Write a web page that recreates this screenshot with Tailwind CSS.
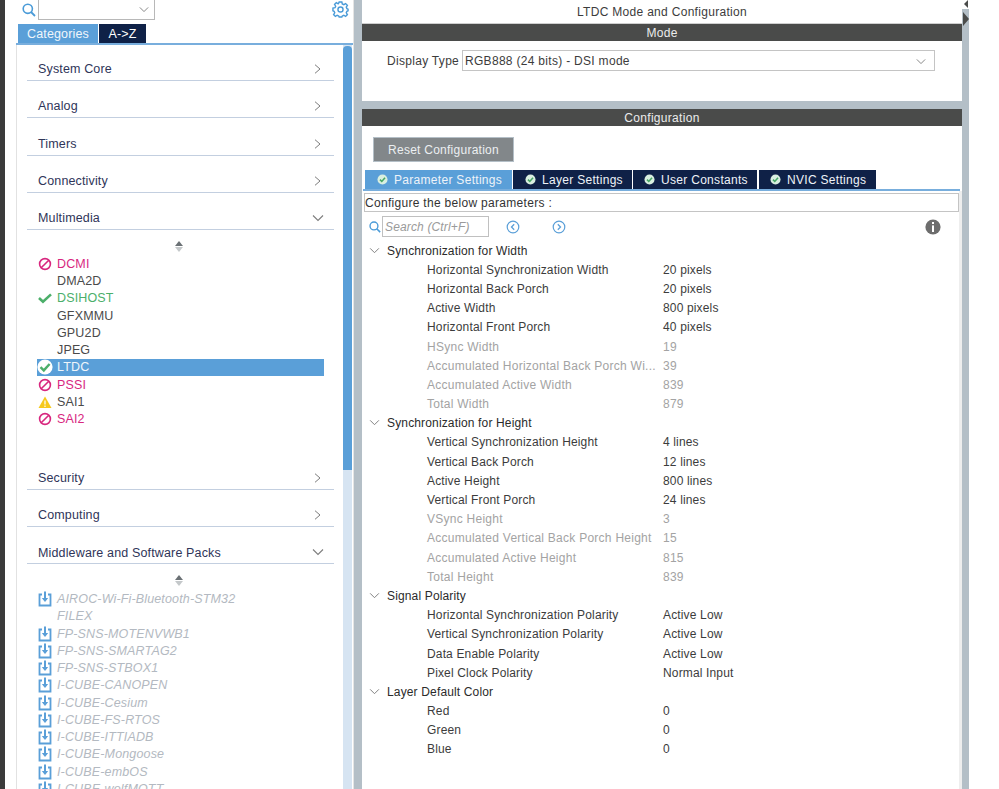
<!DOCTYPE html>
<html lang="en">
<head>
    <meta charset="UTF-8">
    <title>LTDC Mode and Configuration</title>
    <script src="https://cdn.jsdelivr.net/npm/@tailwindcss/browser@4"></script>
</head>
<body class="bg-white font-['Liberation_Sans',Arial,sans-serif] text-[12px] tracking-[0.15px] overflow-hidden">
    <svg class="hidden">
        <symbol id="i-no" viewBox="0 0 14 14"><circle cx="7" cy="7" r="5.4" fill="none" stroke="#d8277f" stroke-width="1.6"/><path d="M3.2 10.8 10.8 3.2" stroke="#d8277f" stroke-width="1.6"/></symbol>
        <symbol id="i-check" viewBox="0 0 14 14"><path d="M1 7 5 10.8 13 3.4" fill="none" stroke="#4caf6a" stroke-width="2.6"/></symbol>
        <symbol id="i-warn" viewBox="0 0 14 14"><path d="M7 1.5 13.5 13H.5Z" fill="#f6c91c"/><path d="M7 5.5V9.5M7 10.6V12" stroke="#fff" stroke-width="1.2"/></symbol>
        <symbol id="i-dl" viewBox="0 0 14 16"><path d="M4 3.5H1.5V14.5H12.5V3.5H10" fill="none" stroke="#5a9fd8" stroke-width="1.8"/><path d="M7 .5V9" stroke="#5a9fd8" stroke-width="2"/><path d="M3.8 7 7 11 10.2 7Z" fill="#5a9fd8"/></symbol>
        <symbol id="i-ok" viewBox="0 0 14 14"><circle cx="7" cy="7" r="6.4" fill="#d9efe0"/><path d="M3.8 7.2 6.1 9.5 10.2 4.9" fill="none" stroke="#47a765" stroke-width="2"/></symbol>
        <symbol id="i-right" viewBox="0 0 7 10"><path d="M1 .7 6 5 1 9.3" fill="none" stroke="#7d7d7d" stroke-width="1"/></symbol>
        <symbol id="i-down" viewBox="0 0 12 8"><path d="M1 1.5 6 6.5 11 1.5" fill="none" stroke="#7d7d7d" stroke-width="1.1"/></symbol>
        <symbol id="i-sort" viewBox="0 0 8 11"><path d="M4 0 8 5H0Z" fill="#6b7175"/><path d="M4 11 0 6H8Z" fill="#c4c8ca"/></symbol>
        <symbol id="i-search" viewBox="0 0 14 14"><circle cx="5.8" cy="5.8" r="4.6" fill="none" stroke="#4a9bd8" stroke-width="1.6"/><path d="M9 9 13 13" stroke="#4a9bd8" stroke-width="1.8"/></symbol>
    </svg>

    <div class="flex h-[789px] w-[999px]">
        <div class="w-[5px] bg-[#3b3b3b]"></div>

        <!-- left panel -->
        <div class="w-[349px] pl-[11px] flex flex-col overflow-hidden border-r border-[#e4e4e4] text-[12.5px]">
            <div class="h-[24px] flex items-start">
                <svg class="w-[14px] h-[14px] mt-[3px] ml-[6px]"><use href="#i-search"/></svg>
                <div class="w-[117px] h-[20px] ml-[2px] bg-white border border-[#b8b8b8] border-t-0 flex items-center justify-end pr-[5px]">
                    <svg class="w-[10px] h-[7px]"><use href="#i-down"/></svg>
                </div>
                <svg class="w-[17px] h-[17px] mt-px ml-[177px]" viewBox="0 0 18 18"><path d="M7.6 1H10.4L10.9 3.2 12.5 3.9 14.4 2.7 16.3 4.6 15.1 6.5 15.8 8.1 17 8.6V10.4L15.8 10.9 15.1 12.5 16.3 14.4 14.4 16.3 12.5 15.1 10.9 15.8 10.4 17H7.6L7.1 15.8 5.5 15.1 3.6 16.3 1.7 14.4 2.9 12.5 2.2 10.9 1 10.4V7.6L3.2 7.1 3.9 5.5 2.7 3.6 4.6 1.7 6.5 2.9 7.1 2.2Z" fill="none" stroke="#4a9bd8" stroke-width="1.5"/><circle cx="9" cy="9" r="2.7" fill="none" stroke="#4a9bd8" stroke-width="1.5"/></svg>
            </div>
            <div class="flex h-[19px] pl-[2px] gap-px">
                <div class="w-[80px] bg-[#5a9fd8] text-[#f0f6fb] flex items-center justify-center pt-px">Categories</div>
                <div class="w-[47px] bg-[#0f2147] text-white flex items-center justify-center pt-px">A-&gt;Z</div>
            </div>
            <div class="h-[2px] bg-[#78aedd]"></div>

            <div class="flex-1 flex border-l border-[#e2e2e2] min-h-0 relative">
                <div class="flex-1 pl-[10px] pr-[9px] min-w-0" id="cats"></div>
                <div class="w-[9px] mr-[1px] bg-[#d6e4f2] h-full">
                    <div class="h-[424px] mt-px bg-[#5a9fd8] rounded-t-[4px]"></div>
                </div>
            </div>
        </div>

        <div class="w-[8px] bg-[#b4bfc7]"></div>

        <!-- center panel -->
        <div class="w-[600px] flex flex-col text-[#3c3c3c]">
            <div class="h-[24px] flex items-center justify-center border-b border-[#cfcfcf] pt-px tracking-[0.3px]">LTDC Mode and Configuration</div>
            <div class="h-[17px] bg-[#4a4b4a] text-[#ececec] flex items-center justify-center pt-px tracking-[0.3px]">Mode</div>
            <div class="h-[60px] flex items-start pt-[9px] pl-[25px] tracking-[0.3px]">
                <span class="w-[75px] leading-[23px]">Display Type</span>
                <div class="w-[473px] h-[21px] border border-[#c4c4c4] flex items-center justify-between pl-[2px] pr-[8px] pt-px">
                    <span>RGB888 (24 bits) - DSI mode</span>
                    <svg class="w-[10px] h-[7px]"><use href="#i-down"/></svg>
                </div>
            </div>
            <div class="h-[8px] bg-[#b4bfc7]"></div>
            <div class="h-[17px] bg-[#4a4b4a] text-[#ececec] flex items-center justify-center pt-px tracking-[0.3px]">Configuration</div>
            <div class="pt-[11px] pl-[11px]">
                <div class="w-[141px] h-[25px] bg-[#82878a] border border-[#b4bfc7] text-[#eceff1] flex items-center justify-center pt-px tracking-[0.25px]">Reset Configuration</div>
            </div>
            <div class="flex h-[19px] mt-[8px] pl-[3px] gap-px text-[#eef3f8] tracking-[0.3px]">
                <div class="w-[147px] bg-[#5a9fd8] flex items-center pl-[12px] gap-[6px]"><svg class="w-[11px] h-[11px]"><use href="#i-ok"/></svg><span class="pt-px">Parameter Settings</span></div>
                <div class="w-[119px] bg-[#0f2147] flex items-center pl-[12px] gap-[6px]"><svg class="w-[11px] h-[11px]"><use href="#i-ok"/></svg><span class="pt-px">Layer Settings</span></div>
                <div class="w-[124px] bg-[#0f2147] flex items-center pl-[11px] gap-[6px]"><svg class="w-[11px] h-[11px]"><use href="#i-ok"/></svg><span class="pt-px">User Constants</span></div>
                <div class="w-[117px] ml-px bg-[#0f2147] flex items-center pl-[11px] gap-[6px]"><svg class="w-[11px] h-[11px]"><use href="#i-ok"/></svg><span class="pt-px">NVIC Settings</span></div>
            </div>
            <div class="h-[2px] bg-[#78aedd] ml-px mr-[2px]"></div>
            <div class="flex-1 flex min-h-0">
                <div class="flex-1 min-w-0">
                    <div class="h-[19px] mt-[2px] ml-[2px] border border-[#c4c4c4] flex items-center pt-px text-[#333] tracking-[0.3px]">Configure the below parameters :</div>
                    <div class="h-[21px] mt-[4px] flex items-center">
                        <svg class="w-[12px] h-[12px] ml-[7px]"><use href="#i-search"/></svg>
                        <div class="w-[107px] h-[21px] ml-px border border-[#c0c0c0] flex items-center pl-[2px] pt-px italic text-[#9a9a9a]">Search (Ctrl+F)</div>
                        <svg class="w-[14px] h-[14px] ml-[17px]" viewBox="0 0 14 14"><circle cx="7" cy="7" r="5.8" fill="none" stroke="#5a9fd8" stroke-width="1.2"/><path d="M8.2 4.3 5.5 7 8.2 9.7" fill="none" stroke="#5a9fd8" stroke-width="1.3"/></svg>
                        <svg class="w-[14px] h-[14px] ml-[32px]" viewBox="0 0 14 14"><circle cx="7" cy="7" r="5.8" fill="none" stroke="#5a9fd8" stroke-width="1.2"/><path d="M5.8 4.3 8.5 7 5.8 9.7" fill="none" stroke="#5a9fd8" stroke-width="1.3"/></svg>
                        <svg class="w-[16px] h-[16px] ml-[359px]" viewBox="0 0 16 16"><circle cx="8" cy="8" r="7.6" fill="#6d6d6d"/><rect x="7" y="3" width="2" height="2" fill="#fff"/><rect x="7" y="6.4" width="2" height="6.6" fill="#fff"/></svg>
                    </div>
                    <div class="mt-[3.5px]" id="params"></div>
                </div>
                <div class="w-[3px] bg-[#eeeeee]"></div>
            </div>
        </div>

        <!-- splitter with collapse arrows -->
        <div class="w-[7px] bg-[#b4bfc7] relative">
            <div class="absolute top-0 left-0 w-full h-[9px] bg-white"></div>
            <svg class="absolute top-0 left-0 w-[7px] h-[28px]" viewBox="0 0 7 28"><path d="M6 0V8L2 4Z" fill="#4a4b4a"/><path d="M1 12 7 19 1 26Z" fill="#4a4b4a"/></svg>
        </div>
        <div class="flex-1 bg-white"></div>
    </div>

    <script>
        const catHead = (name, open, h) => `
            <div class="flex items-end justify-between border-b-[1.5px] border-[#c3cfe0] pl-[11px] pr-[11px] text-[#2f3559]" style="height:${h}px">
                <span class="pb-px">${name}</span>
                <svg class="${open ? 'w-[12px] h-[8px] mb-[7px] -mr-[1px]' : 'w-[7px] h-[10px] mb-[6px] mr-[2px]'}"><use href="#${open ? 'i-down' : 'i-right'}"/></svg>
            </div>`;

        const sortIcon = h => `<div class="flex items-start justify-center pr-[3px] pt-[11px]" style="height:${h}px"><svg class="w-[8px] h-[11px]"><use href="#i-sort"/></svg></div>`;

        const item = ([name, icon, cls]) => `
            <div class="h-[17.25px] w-[287px] ml-[10px] flex items-center ${cls}">
                <span class="w-[16px] mr-[4px] flex justify-center">${icon ? `<svg class="w-[14px] h-[14px]"><use href="#${icon}"/></svg>` : ''}</span><span class="pt-px">${name}</span>
            </div>`;

        const dlItem = ([name, icon]) => `
            <div class="h-[17.25px] flex items-center ml-[10px] italic text-[#b3b9c1]">
                <span class="w-[16px] mr-[4px] flex justify-center">${icon ? `<svg class="w-[14px] h-[16px]"><use href="#i-dl"/></svg>` : ''}</span><span class="pt-px">${name}</span>
            </div>`;

        const multimedia = [
            ['DCMI', 'i-no', 'text-[#d8277f]'],
            ['DMA2D', '', 'text-[#4a4a4a]'],
            ['DSIHOST', 'i-check', 'text-[#4caf6a]'],
            ['GFXMMU', '', 'text-[#4a4a4a]'],
            ['GPU2D', '', 'text-[#4a4a4a]'],
            ['JPEG', '', 'text-[#4a4a4a]'],
            ['LTDC', 'ltdc', 'bg-[#5a9fd8] text-[#eef5fb]'],
            ['PSSI', 'i-no', 'text-[#d8277f]'],
            ['SAI1', 'i-warn', 'text-[#4a4a4a]'],
            ['SAI2', 'i-no', 'text-[#d8277f]'],
        ];

        const packs = [
            ['AIROC-Wi-Fi-Bluetooth-STM32', 1], ['FILEX', 0], ['FP-SNS-MOTENVWB1', 1],
            ['FP-SNS-SMARTAG2', 1], ['FP-SNS-STBOX1', 1], ['I-CUBE-CANOPEN', 1],
            ['I-CUBE-Cesium', 1], ['I-CUBE-FS-RTOS', 1], ['I-CUBE-ITTIADB', 1],
            ['I-CUBE-Mongoose', 1], ['I-CUBE-embOS', 1], ['I-CUBE-wolfMQTT', 1],
        ];

        document.getElementById('cats').innerHTML =
            catHead('System Core', false, 36) + catHead('Analog', false, 37.2) +
            catHead('Timers', false, 37.4) + catHead('Connectivity', false, 37.4) +
            catHead('Multimedia', true, 37.2) +
            sortIcon(25) + multimedia.map(item).join('') +
            catHead('Security', false, 62) + catHead('Computing', false, 37.4) +
            catHead('Middleware and Software Packs', true, 37.4) +
            sortIcon(26) + packs.map(dlItem).join('');

        // the selected row gets a white disc behind its tick
        document.querySelector('use[href="#ltdc"]').parentElement.outerHTML =
            '<svg class="w-[16px] h-[16px]" viewBox="0 0 16 16"><circle cx="8" cy="8" r="7.6" fill="#fff"/><path d="M3.5 8.2 6.8 11.4 12.6 5" fill="none" stroke="#4caf6a" stroke-width="2.4"/></svg>';

        // [label, value, kind] - kind: h = section header, d = read only
        const rows = [
            ['Synchronization for Width', '', 'h'],
            ['Horizontal Synchronization Width', '20 pixels'],
            ['Horizontal Back Porch', '20 pixels'],
            ['Active Width', '800 pixels'],
            ['Horizontal Front Porch', '40 pixels'],
            ['HSync Width', '19', 'd'],
            ['Accumulated Horizontal Back Porch Wi...', '39', 'd'],
            ['Accumulated Active Width', '839', 'd'],
            ['Total Width', '879', 'd'],
            ['Synchronization for Height', '', 'h'],
            ['Vertical Synchronization Height', '4 lines'],
            ['Vertical Back Porch', '12 lines'],
            ['Active Height', '800 lines'],
            ['Vertical Front Porch', '24 lines'],
            ['VSync Height', '3', 'd'],
            ['Accumulated Vertical Back Porch Height', '15', 'd'],
            ['Accumulated Active Height', '815', 'd'],
            ['Total Height', '839', 'd'],
            ['Signal Polarity', '', 'h'],
            ['Horizontal Synchronization Polarity', 'Active Low'],
            ['Vertical Synchronization Polarity', 'Active Low'],
            ['Data Enable Polarity', 'Active Low'],
            ['Pixel Clock Polarity', 'Normal Input'],
            ['Layer Default Color', '', 'h'],
            ['Red', '0'],
            ['Green', '0'],
            ['Blue', '0'],
        ];

        document.getElementById('params').innerHTML = rows.map(([label, value, kind]) => {
            if (kind === 'h') {
                return `<div class="h-[19.2px] flex items-center pl-[7px] text-[#2b2b2b]"><svg class="w-[11px] h-[7px] mr-[7px]"><use href="#i-down"/></svg><span class="pt-px">${label}</span></div>`;
            }
            return `<div class="h-[19.2px] flex items-center pl-[65px] pt-px ${kind === 'd' ? 'text-[#a3a3a3] tracking-[0.26px]' : 'text-[#3c3c3c]'}"><span class="w-[236px] whitespace-nowrap">${label}</span><span>${value}</span></div>`;
        }).join('');
    </script>
</body>
</html>
